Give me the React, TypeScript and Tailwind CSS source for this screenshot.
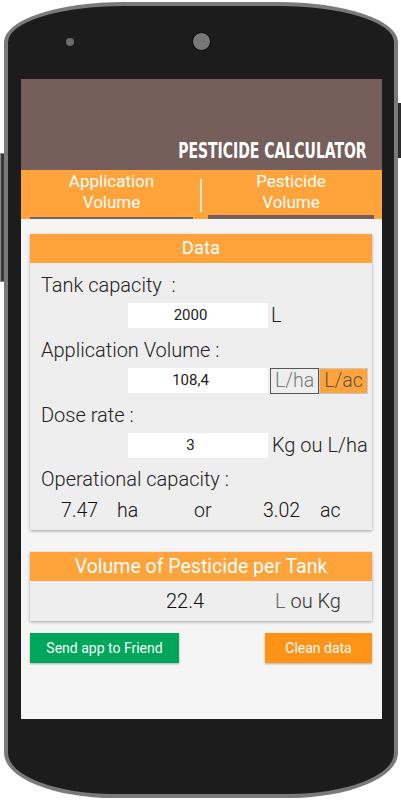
export default function App() {
  return (
    <div className="w-[401px] h-[800px] bg-white flex overflow-hidden font-['Roboto',sans-serif]">
      <div className="w-[4px] shrink-0">
        <div className="mt-[153px] h-[129px] w-[4px] bg-[#3a3a3a] border-y border-l border-[#8a8a8a]" />
      </div>
      <div className="mt-[2px] w-[394px] h-[796px] shrink-0 bg-[#1c1c1c] border-[4px] border-[#7a7a7a] rounded-tl-[120px_40px] rounded-tr-[120px_40px] rounded-bl-[110px_45px] rounded-br-[110px_45px] flex flex-col">
        <div className="h-[73px] flex items-start shrink-0">
          <div className="ml-[58px] mt-[32px] w-[8px] h-[8px] rounded-full bg-[#6b6b6b]" />
          <div className="ml-[118px] mt-[26px] w-[19px] h-[19px] rounded-full bg-[#777777] border border-[#0a0a0a]" />
        </div>
        <div className="ml-[13px] w-[361px] h-[640px] shrink-0 bg-[#f5f5f5] flex flex-col">
          <div className="h-[91px] bg-[#765f5a] flex items-end justify-end pr-[15px] pb-[8px]">
            <span className="inline-block whitespace-nowrap font-['DejaVu_Sans_Condensed',sans-serif] font-bold text-[21px] leading-[21px] text-white scale-x-[0.74] origin-right">
              PESTICIDE CALCULATOR
            </span>
          </div>
          <div className="h-[49px] bg-[#ffa33a] flex pl-[9px] pr-[8px]">
            <div className="w-[163px] flex flex-col justify-between">
              <div className="pt-[1px] text-center text-white text-[17px] leading-[21px]">
                Application
                <br />
                Volume
              </div>
              <div className="h-[2px] bg-[#6f6460]" />
            </div>
            <div className="w-[15px] flex justify-center pt-[9px]">
              <div className="w-[2px] h-[33px] bg-[#ffe6c8]" />
            </div>
            <div className="flex-1 flex flex-col justify-between">
              <div className="pt-[1px] text-center text-white text-[17px] leading-[21px]">
                Pesticide
                <br />
                Volume
              </div>
              <div className="h-[4px] bg-[#765f5a]" />
            </div>
          </div>

          <div className="mt-[15px] ml-[9px] w-[342px] bg-[#eeeeee] shadow-[0_1px_3px_rgba(0,0,0,0.35)]">
            <div className="h-[29px] bg-[#ffa33a] flex items-center justify-center text-white text-[18.5px]">
              Data
            </div>
            <div className="pl-[11px] pb-[7px] text-[#222222]">
              <div className="mt-[10px] text-[20px] leading-[25px] font-light whitespace-pre">Tank capacity  :</div>
              <div className="mt-[5px] flex items-center h-[25px]">
                <div className="ml-[87px] w-[140px] h-[25px] bg-white text-center pr-[15px] text-[15px] leading-[25px]">2000</div>
                <span className="ml-[3px] text-[20px] leading-[25px] font-light">L</span>
              </div>

              <div className="mt-[10px] text-[20px] leading-[25px] font-light">Application Volume :</div>
              <div className="mt-[5px] flex items-center h-[25px]">
                <div className="ml-[87px] w-[140px] h-[25px] bg-white text-center pr-[15px] text-[15px] leading-[25px]">108,4</div>
                <div className="ml-[2px] w-[49px] h-[26px] border border-[#555555] bg-[#eeeeee] text-[#777777] text-[19.5px] leading-[24px] font-light text-center">L/ha</div>
                <div className="w-[49px] h-[26px] border border-[#c8c8c8] bg-[#ffa33a] text-[#555555] text-[19.5px] leading-[24px] font-light text-center">L/ac</div>
              </div>

              <div className="mt-[10px] text-[20px] leading-[25px] font-light">Dose rate :</div>
              <div className="mt-[5px] flex items-center h-[25px]">
                <div className="ml-[87px] w-[140px] h-[25px] bg-white text-center pr-[15px] text-[15px] leading-[25px]">3</div>
                <span className="ml-[4px] text-[20px] leading-[25px] font-light whitespace-nowrap">Kg ou L/ha</span>
              </div>

              <div className="mt-[9px] text-[20px] leading-[25px] font-light">Operational capacity :</div>
              <div className="mt-[6px] flex items-center h-[25px] text-[19.5px] leading-[25px] pl-[20px] font-light text-[#111111]">
                <span className="w-[56px]">7.47</span>
                <span className="w-[77px]">ha</span>
                <span className="w-[69px]">or</span>
                <span className="w-[57px]">3.02</span>
                <span>ac</span>
              </div>
            </div>
          </div>

          <div className="mt-[22px] ml-[9px] w-[342px] bg-[#eeeeee] shadow-[0_1px_3px_rgba(0,0,0,0.35)]">
            <div className="h-[29px] bg-[#ffa33a] flex items-center justify-center text-white text-[19.5px]">
              Volume of Pesticide per Tank
            </div>
            <div className="h-[40px] flex items-center text-[20px] font-light">
              <span className="ml-[136px] w-[109px] text-[#111111]">22.4</span>
              <span className="text-[#666666]">L</span>
              <span className="text-[#333333] whitespace-pre"> ou Kg</span>
            </div>
          </div>

          <div className="mt-[12px] ml-[9px] w-[342px] flex justify-between">
            <div className="w-[149px] h-[30px] bg-[#00a65a] shadow-[0_1px_2px_rgba(0,0,0,0.3)] flex items-center justify-center text-white text-[14px]">
              Send app to Friend
            </div>
            <div className="w-[107px] h-[30px] bg-[#ff9318] shadow-[0_1px_2px_rgba(0,0,0,0.3)] flex items-center justify-center text-white text-[14px]">
              Clean data
            </div>
          </div>
        </div>
      </div>
      <div className="w-[3px] shrink-0">
        <div className="mt-[103px] h-[55px] w-[3px] bg-[#2b2b2b]" />
      </div>
    </div>
  );
}
